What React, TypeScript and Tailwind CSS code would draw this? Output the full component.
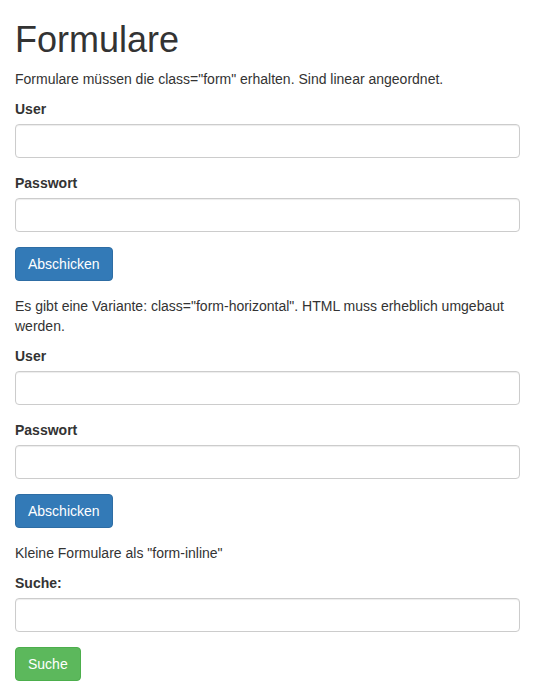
import React from 'react'

const inputCls =
  'block w-full h-[34px] px-3 py-1.5 text-sm text-[#555] bg-white border border-[#ccc] rounded shadow-[inset_0_1px_1px_rgba(0,0,0,0.075)] outline-none'

function Field({ label, type = 'text' }: { label: string; type?: string }) {
  return (
    <div className="mb-[15px]">
      <label className="inline-block mb-[5px] font-bold leading-5">{label}</label>
      <input type={type} className={inputCls} />
    </div>
  )
}

function Btn({ children, color }: { children: React.ReactNode; color: 'blue' | 'green' }) {
  const cls =
    color === 'blue'
      ? 'bg-[#337ab7] border-[#2e6da4]'
      : 'bg-[#5cb85c] border-[#4cae4c]'
  return (
    <div className="mb-[15px]">
      <button
        type="button"
        className={`inline-block h-[34px] px-3 py-1.5 text-sm leading-5 text-white border rounded ${cls}`}
      >
        {children}
      </button>
    </div>
  )
}

export default function App() {
  return (
    <div
      className="px-[15px] text-sm leading-5 text-[#333] bg-white min-h-screen"
      style={{ fontFamily: '"Liberation Sans", Arial, sans-serif' }}
    >
      <h1 className="pt-5 mb-2.5 text-[36px] leading-[39px] font-medium">Formulare</h1>
      <p className="mb-2.5">Formulare müssen die class="form" erhalten. Sind linear angeordnet.</p>
      <form>
        <Field label="User" />
        <Field label="Passwort" type="password" />
        <Btn color="blue">Abschicken</Btn>
      </form>

      <p className="mb-2.5">
        Es gibt eine Variante: class="form-horizontal". HTML muss erheblich umgebaut werden.
      </p>
      <form>
        <Field label="User" />
        <Field label="Passwort" type="password" />
        <Btn color="blue">Abschicken</Btn>
      </form>

      <p className="mb-2.5">Kleine Formulare als "form-inline"</p>
      <form>
        <Field label="Suche:" />
        <Btn color="green">Suche</Btn>
      </form>
    </div>
  )
}
